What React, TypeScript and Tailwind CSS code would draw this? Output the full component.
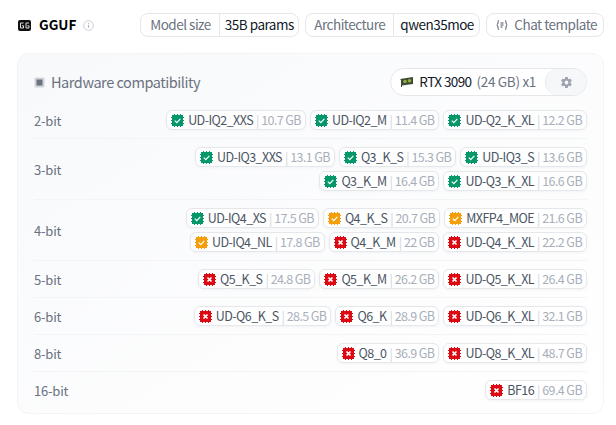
import React from "react";

type Level = "ok" | "warn" | "bad";

const rows: { label: string; lines: [string, string, Level][][] }[] = [
  {
    label: "2-bit",
    lines: [[["UD-IQ2_XXS", "10.7 GB", "ok"], ["UD-IQ2_M", "11.4 GB", "ok"], ["UD-Q2_K_XL", "12.2 GB", "ok"]]],
  },
  {
    label: "3-bit",
    lines: [
      [["UD-IQ3_XXS", "13.1 GB", "ok"], ["Q3_K_S", "15.3 GB", "ok"], ["UD-IQ3_S", "13.6 GB", "ok"]],
      [["Q3_K_M", "16.4 GB", "ok"], ["UD-Q3_K_XL", "16.6 GB", "ok"]],
    ],
  },
  {
    label: "4-bit",
    lines: [
      [["UD-IQ4_XS", "17.5 GB", "ok"], ["Q4_K_S", "20.7 GB", "warn"], ["MXFP4_MOE", "21.6 GB", "warn"]],
      [["UD-IQ4_NL", "17.8 GB", "warn"], ["Q4_K_M", "22 GB", "bad"], ["UD-Q4_K_XL", "22.2 GB", "bad"]],
    ],
  },
  {
    label: "5-bit",
    lines: [[["Q5_K_S", "24.8 GB", "bad"], ["Q5_K_M", "26.2 GB", "bad"], ["UD-Q5_K_XL", "26.4 GB", "bad"]]],
  },
  {
    label: "6-bit",
    lines: [[["UD-Q6_K_S", "28.5 GB", "bad"], ["Q6_K", "28.9 GB", "bad"], ["UD-Q6_K_XL", "32.1 GB", "bad"]]],
  },
  {
    label: "8-bit",
    lines: [[["Q8_0", "36.9 GB", "bad"], ["UD-Q8_K_XL", "48.7 GB", "bad"]]],
  },
  {
    label: "16-bit",
    lines: [[["BF16", "69.4 GB", "bad"]]],
  },
];

function ChipIcon({ level }: { level: Level }) {
  const fill = level === "ok" ? "#059669" : level === "warn" ? "#f59e0b" : "#dc0a12";
  return (
    <svg width="13" height="13" viewBox="0 0 13 13" className="shrink-0">
      <path
        d="M3.5 0v13M6.5 0v13M9.5 0v13M0 3.5h13M0 6.5h13M0 9.5h13"
        stroke={fill}
        strokeWidth="1"
        shapeRendering="crispEdges"
      />
      <rect x="1" y="1" width="11" height="11" fill={fill} />
      {level === "bad" ? (
        <path d="M4.5 4.5l4 4M8.5 4.5l-4 4" stroke="white" strokeWidth="1.7" fill="none" />
      ) : (
        <path d="M3.8 6.6l2 2 3.5-3.8" stroke="white" strokeWidth="1.2" fill="none" />
      )}
    </svg>
  );
}

function Quant({ name, size, level }: { name: string; size: string; level: Level }) {
  return (
    <div className="flex h-[20px] items-center rounded-md border border-gray-200 bg-white/70 pl-[4px] pr-[4px] text-[12.5px] whitespace-nowrap shadow-sm shadow-gray-100">
      <ChipIcon level={level} />
      <span className="ml-[4px] tracking-[-0.55px] text-[#4b5563]">{name}</span>
      <span className="ml-[3px] text-[#d1d5db]">|</span>
      <span className="ml-[2px] tracking-[-0.6px] text-[#a8afba]">{size}</span>
    </div>
  );
}

export default function App() {
  return (
    <div className="h-[425px] w-[616px] overflow-hidden bg-white leading-none font-['Noto_Sans_CJK_SC','Liberation_Sans',sans-serif]">
      <div className="flex h-[53px] items-start pl-[18px] pr-[12px] pt-[13px]">
        <div className="flex h-[24px] items-center">
          <svg width="13" height="11" viewBox="0 0 13 11" className="mr-[8px]">
            <rect width="13" height="11" rx="2" fill="#111" />
            <path d="M5.5 3H2.5v5h3V5.8H4M11 3H8v5h3V5.8H9.5" stroke="#ddd" strokeWidth="1" fill="none" />
          </svg>
          <span className="text-[13.5px] font-bold text-black">GGUF</span>
          <svg width="11" height="11" viewBox="0 0 11 11" className="ml-[7px]">
            <circle cx="5.5" cy="5.5" r="4.8" fill="none" stroke="#c4c9d2" strokeWidth="0.9" />
            <path d="M5.5 4.8v3M5.5 2.8v1" stroke="#aeb4bf" strokeWidth="1" />
          </svg>
        </div>
        <div className="ml-auto flex gap-[6.5px] text-[13.5px] tracking-[-0.5px] whitespace-nowrap">
          <div className="flex h-[24px] items-center rounded-lg border border-gray-200 bg-white">
            <span className="flex h-full items-center border-r border-gray-200 pl-[9px] pr-[8px] text-[#6b7280]">Model size</span>
            <span className="pl-[5px] pr-[4px] text-[#111827]">35B params</span>
          </div>
          <div className="flex h-[24px] items-center rounded-lg border border-gray-200 bg-white">
            <span className="flex h-full items-center border-r border-gray-200 px-[8px] text-[#6b7280]">Architecture</span>
            <span className="pl-[6px] pr-[5px] text-[#111827]">qwen35moe</span>
          </div>
          <div className="flex h-[24px] items-center gap-[6px] rounded-lg border border-gray-200 bg-white pl-[9px] pr-[6px] text-[#6b7280]">
            <svg width="12" height="12" viewBox="0 0 12 12" fill="none" stroke="#4b5563" strokeWidth="1">
              <path d="M3 1.5C1.8 1.5 2 3 2 4S1.5 5.5.8 6c.7.5 1.2 1 1.2 2s-.2 2.5 1 2.5M9 1.5c1.2 0 1 1.5 1 2.5s.5 1.5 1.2 2c-.7.5-1.2 1-1.2 2s.2 2.5-1 2.5" />
              <path d="M4.5 4h3M4.5 6h3M4.5 8h2" />
            </svg>
            Chat template
          </div>
        </div>
      </div>

      <div className="ml-[17px] h-[361px] w-[587px] rounded-xl border border-gray-100 bg-gradient-to-br from-[#f8f9fb] to-white px-[16px] pt-[14px]">
        <div className="flex h-[28px] items-center">
          <svg width="11" height="11" viewBox="0 0 11 11" className="mr-[6px]">
            <rect x="0.5" y="0.5" width="10" height="10" rx="1" fill="#d1d5db" />
            <rect x="2.5" y="2.5" width="6" height="6" fill="#6b7280" />
          </svg>
          <span className="text-[14.5px] tracking-[-0.45px] text-[#6b7280]">Hardware compatibility</span>
          <div className="ml-auto flex h-[28px] items-center rounded-full border border-gray-200 bg-white text-[13.5px] whitespace-nowrap">
            <svg width="14" height="10" viewBox="0 0 14 10" className="ml-[9px] mr-[5px]">
              <path d="M0 2l13-2v7L2 8.5V10H1V3z" fill="#3f4a36" />
              <circle cx="5" cy="4.5" r="1.8" fill="#8fae3a" />
              <circle cx="9.5" cy="3.8" r="1.8" fill="#8fae3a" />
            </svg>
            <span className="tracking-[-0.6px] text-[#111827]">RTX 3090</span>
            <span className="ml-[5px] tracking-[-0.3px] text-[#6b7280]">(24 GB) x1</span>
            <div className="ml-[9px] flex h-full w-[41px] items-center justify-center rounded-full border-l border-gray-200 bg-[#f6f7f8]">
              <svg width="13" height="13" viewBox="0 0 24 24" fill="#9ca3af">
                <path d="M19.4 13c.04-.33.06-.66.06-1s-.02-.67-.07-1l2.1-1.65c.2-.15.25-.42.12-.64l-2-3.46a.5.5 0 0 0-.61-.22l-2.49 1a7.3 7.3 0 0 0-1.73-1L14.4 2.4A.5.5 0 0 0 13.9 2h-4a.5.5 0 0 0-.5.42L9.04 5.03c-.62.26-1.2.6-1.73 1l-2.49-1a.5.5 0 0 0-.61.22l-2 3.46c-.13.22-.08.49.12.64L4.43 11c-.05.33-.07.66-.07 1s.02.67.07 1l-2.1 1.65a.5.5 0 0 0-.12.64l2 3.46c.12.22.39.3.61.22l2.49-1c.53.4 1.11.74 1.73 1l.37 2.61c.05.24.26.42.5.42h4c.25 0 .46-.18.5-.42l.37-2.61c.62-.26 1.2-.6 1.73-1l2.49 1c.22.08.49 0 .61-.22l2-3.46a.5.5 0 0 0-.12-.64zM12 15.5a3.5 3.5 0 1 1 0-7 3.5 3.5 0 0 1 0 7z" />
              </svg>
            </div>
          </div>
        </div>

        <div className="mt-[6px] flex flex-col text-[13px] tracking-[-0.2px]">
          {rows.map((row, i) => (
            <div
              key={row.label}
              className={`flex items-center justify-between py-[8px] ${i < rows.length - 1 ? "border-b border-gray-100" : ""}`}
            >
              <span className="text-[#6b7280]">{row.label}</span>
              <div className="flex flex-col items-end gap-[4px]">
                {row.lines.map((line, j) => (
                  <div key={j} className="flex gap-[4px]">
                    {line.map(([name, size, level]) => (
                      <Quant key={name} name={name} size={size} level={level} />
                    ))}
                  </div>
                ))}
              </div>
            </div>
          ))}
        </div>
      </div>
    </div>
  );
}
